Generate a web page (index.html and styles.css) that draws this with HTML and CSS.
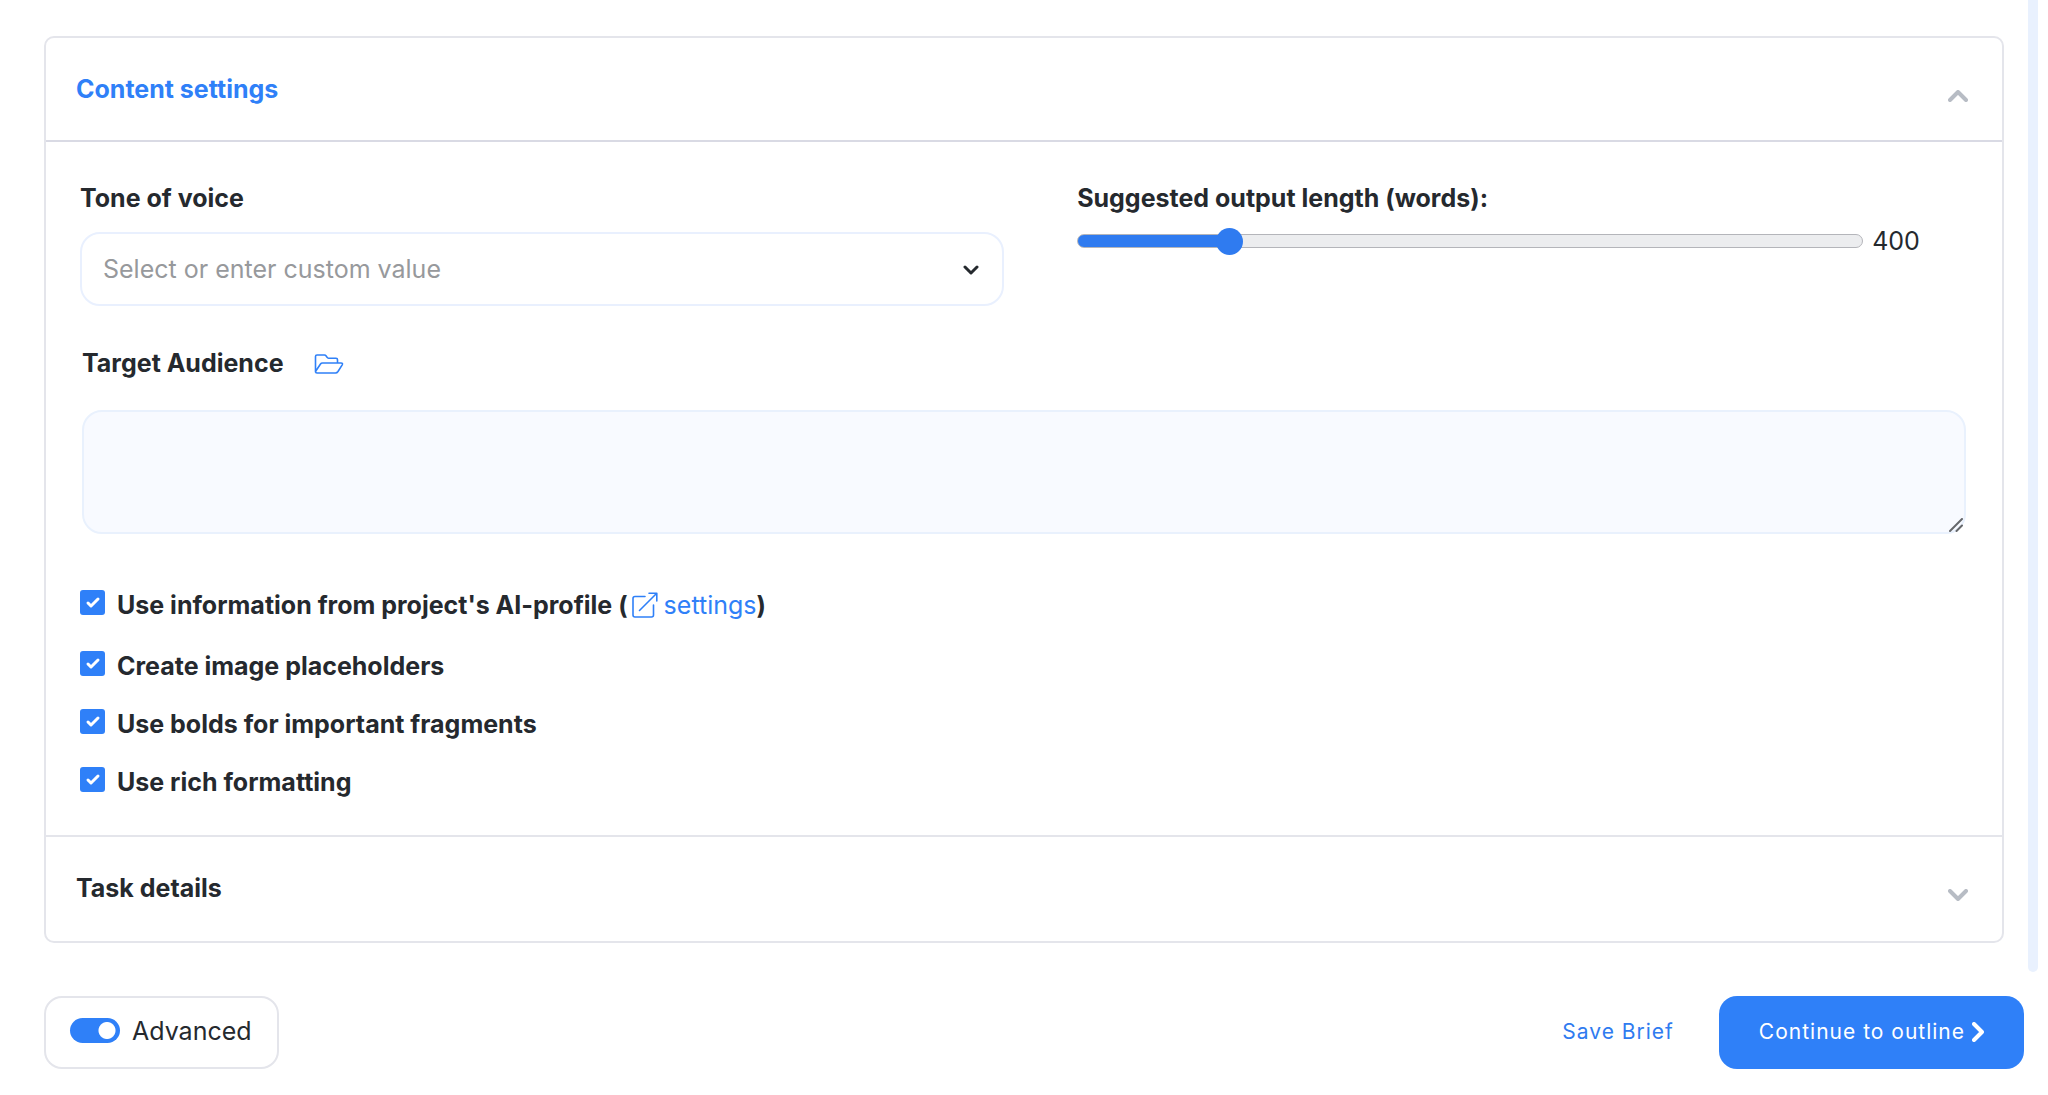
FILE: index.html
```html
<!DOCTYPE html>
<html lang="en">

<head>
    <meta charset="utf-8">
    <title>Brief</title>
    <link rel="stylesheet" href="styles.css">
</head>

<body>
    <div class="page">
        <div class="scroll-area">
            <main class="accordion">
                <button class="accordion-header active" type="button" aria-expanded="true">
                    Content settings
                    <svg class="chevron" viewBox="0 0 20 12"><path d="M2 10l8-8 8 8"/></svg>
                </button>

                <div class="accordion-body">
                    <div class="row">
                        <div class="field">
                            <label for="tone">Tone of voice</label>
                            <div class="select-wrap">
                                <select id="tone">
                                    <option>Select or enter custom value</option>
                                </select>
                                <svg class="select-arrow" viewBox="0 0 16 10"><path d="M2 2l6 6 6-6"/></svg>
                            </div>
                        </div>
                        <div class="field">
                            <label for="length">Suggested output length (words):</label>
                            <div class="slider">
                                <input type="range" id="length" min="0" max="2200" value="400">
                                <output for="length">400</output>
                            </div>
                        </div>
                    </div>

                    <div class="audience">
                        <div class="audience-title">
                            <label for="audience">Target Audience</label>
                            <button class="icon-button" type="button" aria-label="Open saved audiences">
                                <svg class="folder" viewBox="0 0 30 20"><path d="M1.5 18V2.500q0-1.500 1.500-1.500h7.500q1 0 1.500 .800l1 1.400q.6 1 1.500 1h7.500q1.500 0 1.500 1.500V9M1.500 17.500L6.500 10q.7-1 2-1h18.500q2.200 0 1.200 1.800L24 17.500q-1 1.500-2.500 1.500H3q-1.500 0-1.500-1.500"/></svg>
                            </button>
                        </div>
                        <div class="textarea-wrap">
                            <textarea id="audience"></textarea>
                            <svg class="grip" viewBox="0 0 14 14"><path d="M1 13L13 1M7.500 13L13 7.500"/></svg>
                        </div>
                    </div>

                    <div class="options">
                        <div class="option profile">
                            <input type="checkbox" id="profile" checked>
                            <label for="profile">Use information from project's AI-profile (</label>
                            <a href="#settings"><svg class="external" viewBox="0 0 26 26"><path d="M13 4.500H3q-2 0-2 2V23q0 2 2 2h16.500q2 0 2-2V13M7.500 18.500L24.500 1.500M17 1.200h7.800V9"/></svg>settings</a><span>)</span>
                        </div>
                        <div class="option">
                            <input type="checkbox" id="images" checked>
                            <label for="images">Create image placeholders</label>
                        </div>
                        <div class="option">
                            <input type="checkbox" id="bolds" checked>
                            <label for="bolds">Use bolds for important fragments</label>
                        </div>
                        <div class="option">
                            <input type="checkbox" id="rich" checked>
                            <label for="rich">Use rich formatting</label>
                        </div>
                    </div>
                </div>

                <button class="accordion-header" type="button" aria-expanded="false">
                    Task details
                    <svg class="chevron" viewBox="0 0 20 12"><path d="M2 2l8 8 8-8"/></svg>
                </button>
            </main>
            <div class="scrollbar"></div>
        </div>

        <footer class="footer">
            <div class="advanced">
                <input class="switch" type="checkbox" role="switch" id="advanced" checked>
                <label for="advanced">Advanced</label>
            </div>
            <div class="actions">
                <button class="save" type="button">Save Brief</button>
                <button class="continue" type="button">
                    Continue to outline
                    <svg class="next" viewBox="0 0 12 20"><path d="M2 2l8 8-8 8"/></svg>
                </button>
            </div>
        </footer>
    </div>
</body>

</html>
```

FILE: styles.css
```css
* {
    box-sizing: border-box;
}

body {
    margin: 0;
    background-color: #fff;
    color: #25292e;
    font-family: Inter, sans-serif;
    font-size: 25px;
    line-height: 32px;
}

button,
select,
textarea {
    font: inherit;
    color: inherit;
}

button {
    padding: 0;
    border: none;
    background: none;
    cursor: pointer;
}

svg {
    display: block;
    fill: none;
    stroke: currentColor;
    stroke-linecap: round;
    stroke-linejoin: round;
}

.page {
    display: flex;
    flex-direction: column;
    min-height: 100vh;
}

.scroll-area {
    display: flex;
    flex: 1;
    padding-right: 10px;
}

.accordion {
    flex: 1;
    align-self: flex-start;
    margin: 36px 24px 24px 44px;
    border: 2px solid #e4e5eb;
    border-radius: 10px;
}

.scrollbar {
    width: 10px;
    border-radius: 0 0 5px 5px;
    background-color: #e9f1fe;
}

.accordion-header {
    display: flex;
    justify-content: space-between;
    align-items: center;
    width: 100%;
    height: 104px;
    padding: 0 34px 2px 30px;
    font-weight: 700;
}

.accordion-header.active {
    padding-bottom: 0;
    color: #2f80f8;
    border-bottom: 2px solid #d9dae4;
}

.chevron {
    width: 20px;
    margin-top: 14px;
    color: #b7bcc4;
    stroke-width: 4;
}

.accordion-body {
    padding: 40px 36px 37px 34px;
    border-bottom: 2px solid #e4e5eb;
}

label {
    font-weight: 700;
}

.row {
    display: grid;
    grid-template-columns: 49% 1fr;
    column-gap: 73px;
}

.field label {
    display: block;
}

.select-wrap,
.textarea-wrap {
    position: relative;
}

.select-wrap {
    margin-top: 18px;
}

select {
    display: block;
    appearance: none;
    width: 100%;
    height: 74px;
    padding: 0 60px 0 21px;
    border: 2px solid #e9f0fe;
    border-radius: 20px;
    background-color: #fff;
    color: #97999c;
}

.select-arrow {
    position: absolute;
    top: 33px;
    right: 25px;
    width: 16px;
    color: #25292e;
    stroke-width: 3;
    pointer-events: none;
}

.slider {
    display: flex;
    align-items: center;
    gap: 9px;
    margin-top: 11px;
}

input {
    appearance: none;
    flex: none;
    margin: 0;
}

input[type="range"] {
    flex: 0 1 786px;
    min-width: 0;
    height: 14px;
    border: 1px solid #b4b5ba;
    border-radius: 7px;
    background: linear-gradient(to right, #2f7bf0 19%, #ecedef 19%);
}

input[type="range"]::-webkit-slider-thumb {
    appearance: none;
    width: 27px;
    height: 27px;
    border-radius: 50%;
    background-color: #2f7bf0;
}

.audience {
    margin: 41px 0 40px 2px;
}

.audience-title {
    display: flex;
    align-items: center;
    gap: 30px;
}

.icon-button,
a {
    color: #2f80f8;
}

.folder {
    width: 30px;
    margin-top: 2px;
    stroke-width: 1.6;
}

.textarea-wrap {
    margin-top: 31px;
}

textarea {
    display: block;
    width: 100%;
    height: 124px;
    padding: 16px 20px;
    border: 2px solid #e9f1fd;
    border-radius: 20px;
    background-color: #f8faff;
    resize: none;
}

.grip {
    position: absolute;
    right: 3px;
    bottom: 2px;
    width: 14px;
    color: #66686c;
    stroke-width: 2;
    pointer-events: none;
}

.options {
    display: flex;
    flex-direction: column;
    gap: 26px;
    padding-top: 15px;
}

.option {
    display: flex;
    align-items: center;
    font-weight: 700;
}

.option.profile {
    padding-bottom: 3px;
}

.option input {
    width: 25px;
    height: 25px;
    margin: 0 12px 5px 0;
    border-radius: 3px;
    background: #2f80f8 url("data:image/svg+xml,%3Csvg xmlns='http://www.w3.org/2000/svg' viewBox='0 0 25 25'%3E%3Cpath d='M8 13l3 3 7-7' fill='none' stroke='white' stroke-width='3' stroke-linecap='round' stroke-linejoin='round'/%3E%3C/svg%3E");
}

a {
    display: flex;
    align-items: center;
    gap: 6px;
    margin-left: 4px;
    font-weight: 400;
    text-decoration: none;
}

.external {
    width: 26px;
    stroke-width: 1.6;
}

.footer {
    display: flex;
    justify-content: space-between;
    align-items: center;
    padding: 24px 24px 26px 44px;
}

.advanced {
    display: flex;
    align-items: center;
    gap: 12px;
    height: 73px;
    padding: 0 25px 4px 24px;
    border: 2px solid #e4e5eb;
    border-radius: 18px;
}

.advanced label {
    font-weight: 400;
}

.switch {
    width: 50px;
    height: 25px;
    border-radius: 13px;
    background: radial-gradient(circle at 37px 50%, #fff 8px, #2f80f8 9px);
}

.actions {
    display: flex;
    align-items: center;
    gap: 45px;
}

.save,
.continue {
    padding-bottom: 2px;
    font-size: 21px;
    letter-spacing: 1px;
}

.save {
    color: #2f7bf0;
}

.continue {
    display: flex;
    align-items: center;
    gap: 7px;
    height: 73px;
    padding: 0 40px 2px;
    border-radius: 18px;
    background-color: #2f80f8;
    color: #fff;
}

.next {
    width: 12px;
    stroke-width: 4;
}
```
